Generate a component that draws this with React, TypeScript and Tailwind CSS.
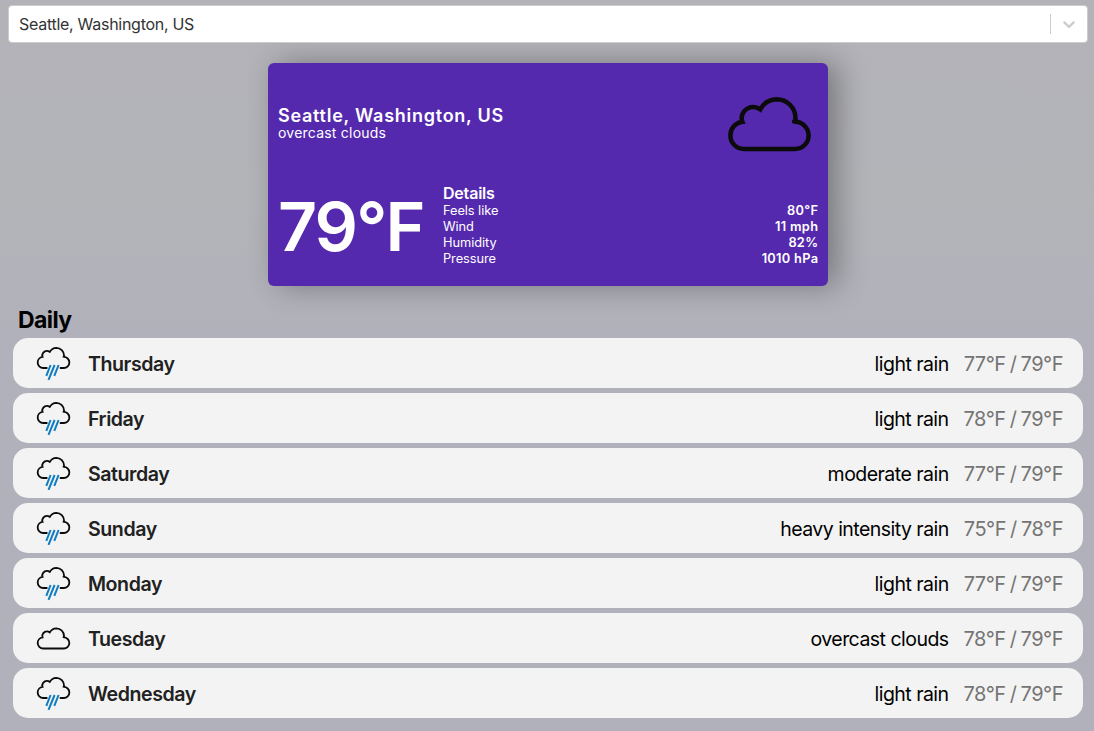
type Forecast = { day: string; kind: 'rain' | 'cloud'; text: string; temps: string };

const days: Forecast[] = [
  { day: 'Thursday', kind: 'rain', text: 'light rain', temps: '77°F / 79°F' },
  { day: 'Friday', kind: 'rain', text: 'light rain', temps: '78°F / 79°F' },
  { day: 'Saturday', kind: 'rain', text: 'moderate rain', temps: '77°F / 79°F' },
  { day: 'Sunday', kind: 'rain', text: 'heavy intensity rain', temps: '75°F / 78°F' },
  { day: 'Monday', kind: 'rain', text: 'light rain', temps: '77°F / 79°F' },
  { day: 'Tuesday', kind: 'cloud', text: 'overcast clouds', temps: '78°F / 79°F' },
  { day: 'Wednesday', kind: 'rain', text: 'light rain', temps: '78°F / 79°F' },
];

const details = [
  ['Feels like', '80°F'],
  ['Wind', '11 mph'],
  ['Humidity', '82%'],
  ['Pressure', '1010 hPa'],
];

const bumps =
  'A13.6 13.6 0 0 1 4.4 40.4 A13.6 13.6 0 0 1 16.4 26.8 C13.6 19.5 19.5 12 27.3 12 Q31 12 34.3 14.4 A19 19 0 0 1 50.5 4.2 A19 19 0 0 1 69.5 23.2 Q69.5 25.5 68.4 28.2 V26.8 A13.6 13.6 0 0 1 82.6 40.4 A13.6 13.6 0 0 1 69 54';

function Cloud() {
  return <path d={`M18 54 ${bumps} Z`} fill="none" stroke="#0b0b0b" strokeWidth="4.5" />;
}

function DayIcon({ kind }: { kind: 'rain' | 'cloud' }) {
  if (kind === 'cloud') {
    return (
      <svg className="h-10 w-10" viewBox="0 0 40 40">
        <g transform="translate(2.9 8.6) scale(.405)">
          <Cloud />
        </g>
      </svg>
    );
  }
  return (
    <svg className="h-10 w-10" viewBox="0 0 40 40">
      <g transform="translate(2.9 3.1) scale(.405)">
        <path d={`M28.5 54 H18 ${bumps} H59`} fill="none" stroke="#0b0b0b" strokeWidth="4.5" />
      </g>
      <path d="M17.6 22 L13.3 32.8 M21.6 22 L15.5 36.8 M25.6 22 L21.3 32.8" stroke="#0f7cc0" strokeWidth="2" />
    </svg>
  );
}

export default function App() {
  return (
    <div className="h-[731px] w-full overflow-hidden bg-[linear-gradient(180deg,#b2b2b8_0%,#b3b4b8_28%,#b1b1bb_45%,#b1b1bb_100%)] px-2 pt-[5px] font-['Inter',sans-serif] text-black">
      <div className="relative z-10 flex h-[38px] w-[1080px] items-center rounded-[4px] border border-[#cccccc] bg-white">
        <span className="ml-[10px] flex-1 text-[16px] leading-5 tracking-[-0.28px] text-[#333333]">Seattle, Washington, US</span>
        <span className="h-5 w-px bg-[#cccccc]" />
        <svg className="mx-2 h-5 w-5" viewBox="0 0 20 20" fill="#cccccc">
          <path d="M4.516 7.548c0.436-0.446 1.043-0.481 1.576 0l3.908 3.747 3.908-3.747c0.533-0.481 1.141-0.446 1.574 0 0.436 0.445 0.408 1.197 0 1.615-0.406 0.418-4.695 4.502-4.695 4.502-0.217 0.223-0.502 0.335-0.787 0.335s-0.57-0.112-0.789-0.335c0 0-4.287-4.084-4.695-4.502s-0.436-1.17 0-1.615z" />
        </svg>
      </div>

      <div className="ml-[260px] mt-5 h-[223px] w-[560px] rounded-[6px] bg-[#5529ae] px-[10px] text-white shadow-[10px_0px_30px_0px_rgba(0,0,0,0.33)]">
        <div className="flex h-[116px] items-center justify-between">
          <div className="pt-[6px]">
            <p className="text-[18px] font-semibold leading-[18px] tracking-[0.74px]">Seattle, Washington, US</p>
            <p className="text-[14px] leading-4 tracking-[0.22px]">overcast clouds</p>
          </div>
          <svg className="mr-[5px] mt-[8px] h-[60px] w-[87px]" viewBox="0 0 87 60">
            <Cloud />
          </svg>
        </div>
        <div className="flex">
          <p className="mt-[4px] w-[165px] whitespace-nowrap text-[68px] font-semibold leading-[86px] tracking-[-1.9px]">79°F</p>
          <div className="mt-[5px] flex-1">
            <p className="text-[16px] font-semibold leading-[19px] tracking-[-0.2px]">Details</p>
            {details.map(([label, value]) => (
              <div key={label} className="flex h-4 items-center justify-between text-[12.8px] leading-4">
                <span className="tracking-[-0.05px]">{label}</span>
                <span className="mr-[-0.3px] font-semibold tracking-[0.3px]">{value}</span>
              </div>
            ))}
          </div>
        </div>
      </div>

      <h2 className="ml-[10px] mt-5 h-8 text-[23px] font-bold leading-[29px] tracking-[-0.6px]">Daily</h2>
      <div className="ml-[5px] flex w-[1070px] flex-col gap-[5px]">
        {days.map((d) => (
          <div key={d.day} className="flex h-[50px] items-center rounded-[15px] bg-[#f3f3f3] px-5 text-[20px] leading-6">
            <DayIcon kind={d.kind} />
            <span className="ml-[15px] mt-[2px] flex-1 text-[19.6px] font-semibold tracking-[-0.45px] text-[#212121]">{d.day}</span>
            <span className="mr-[15px] mt-[2px] text-[19.5px] tracking-[-0.53px]">{d.text}</span>
            <span className="mt-[2px] tracking-[-0.5px] text-[#757575] [word-spacing:-1px]">{d.temps}</span>
          </div>
        ))}
      </div>
    </div>
  );
}
